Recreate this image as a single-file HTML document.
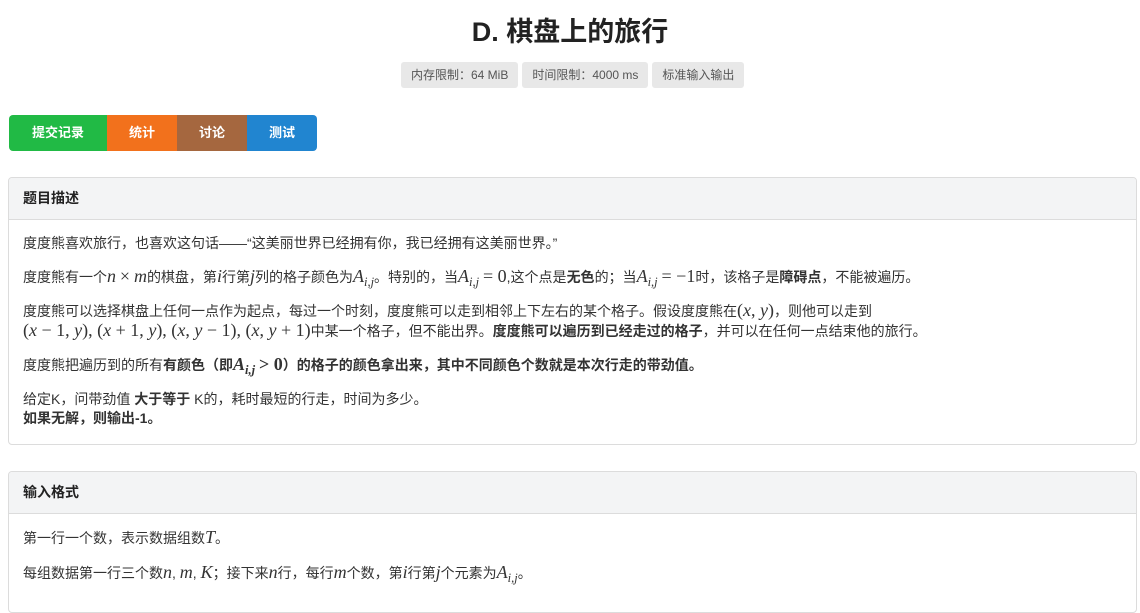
<!DOCTYPE html>
<html><head><meta charset="utf-8"><style>
body{margin:0;background:#fff;font-family:"Liberation Sans","Noto Sans CJK SC",sans-serif;color:#333;width:1140px;height:599px;overflow:hidden;position:relative}
h1{position:absolute;top:12px;left:0;width:1140px;text-align:center;margin:0;font-size:27px;font-weight:bold;color:#222;line-height:40px}
.tags{position:absolute;top:62px;left:401px;display:flex;gap:4px}
.tag{background:#e8e8e8;border-radius:3px;font-size:12px;color:#555;height:26px;line-height:26px;padding:0 10px}
.btns{position:absolute;top:115px;left:9px;display:flex;height:36px;border-radius:4px;overflow:hidden}
.btns div{color:#fff;font-size:13px;font-weight:bold;line-height:36px;text-align:center}
.box{position:absolute;left:8px;width:1127px;border:1px solid #dcdcdc;border-radius:4px;overflow:hidden}
.hd{background:#f3f4f5;height:41px;line-height:41px;border-bottom:1px solid #dcdcdc;padding-left:14px;font-size:14px;font-weight:bold;color:#222}
.bd{padding:0 14px;font-size:14px;color:#333}
.bd p{margin:0;position:absolute;left:14px;line-height:19px;white-space:nowrap}
i.m{font-family:"Liberation Serif",serif;font-size:18px}
.r{font-family:"Liberation Serif",serif;font-size:18px}
sub{font-family:"Liberation Serif",serif;font-style:italic;font-size:12.5px}
</style></head><body>
<h1>D. 棋盘上的旅行</h1>
<div class="tags"><div class="tag">内存限制：64 MiB</div><div class="tag">时间限制：4000 ms</div><div class="tag">标准输入输出</div></div>
<div class="btns"><div style="background:#21ba45;width:98px">提交记录</div><div style="background:#f2711c;width:70px">统计</div><div style="background:#a5673f;width:70px">讨论</div><div style="background:#2185d0;width:70px">测试</div></div>
<div class="box" style="top:177px;height:266px">
<div class="hd">题目描述</div>
<div class="bd">
<p style="top:56px">度度熊喜欢旅行，也喜欢这句话——“这美丽世界已经拥有你，我已经拥有这美丽世界。”</p>
<p style="top:89px">度度熊有一个<i class="m">n</i> <span class="r">×</span> <i class="m">m</i>的棋盘，第<i class="m">i</i>行第<i class="m">j</i>列的格子颜色为<i class="m">A</i><sub>i,j</sub>。特别的，当<i class="m">A</i><sub>i,j</sub> <span class="r">= 0</span>,这个点是<b>无色</b>的；当<i class="m">A</i><sub>i,j</sub> <span class="r">= −1</span>时，该格子是<b>障碍点</b>，不能被遍历。</p>
<p style="top:123px">度度熊可以选择棋盘上任何一点作为起点，每过一个时刻，度度熊可以走到相邻上下左右的某个格子。假设度度熊在<span class="r">(<i>x</i>, <i>y</i>)</span>，则他可以走到<br><span class="r">(<i>x</i> − 1, <i>y</i>), (<i>x</i> + 1, <i>y</i>), (<i>x</i>, <i>y</i> − 1), (<i>x</i>, <i>y</i> + 1)</span>中某一个格子，但不能出界。<b>度度熊可以遍历到已经走过的格子</b>，并可以在任何一点结束他的旅行。</p>
<p style="top:177px">度度熊把遍历到的所有<b>有颜色（即<i class="m">A</i><sub>i,j</sub> <span class="r">&gt; 0</span>）的格子的颜色拿出来，其中不同颜色个数就是本次行走的带劲值。</b></p>
<p style="top:212px">给定K，问带劲值 <b>大于等于</b> K的，耗时最短的行走，时间为多少。<br><b>如果无解，则输出-1。</b></p>
</div></div>
<div class="box" style="top:471px;height:140px">
<div class="hd">输入格式</div>
<div class="bd">
<p style="top:56px">第一行一个数，表示数据组数<i class="m">T</i>。</p>
<p style="top:91px">每组数据第一行三个数<i class="m">n</i>, <i class="m">m</i>, <i class="m">K</i>；接下来<i class="m">n</i>行，每行<i class="m">m</i>个数，第<i class="m">i</i>行第<i class="m">j</i>个元素为<i class="m">A</i><sub>i,j</sub>。</p>
</div></div>
</body></html>
